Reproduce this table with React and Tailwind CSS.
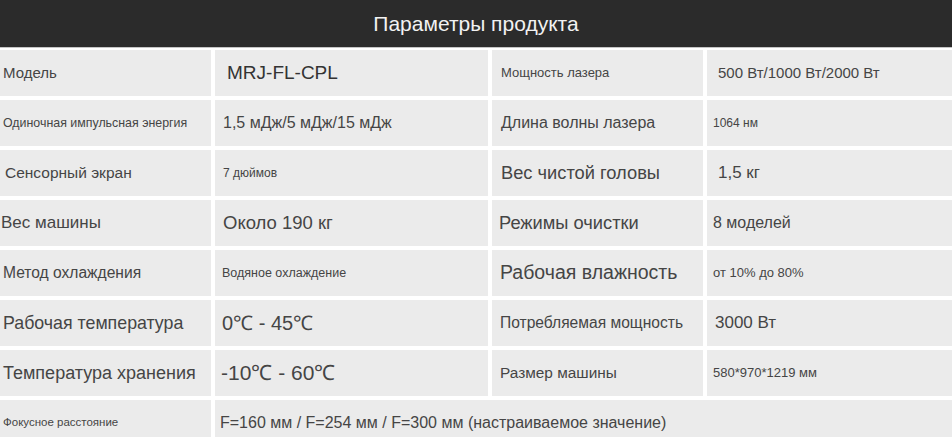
const rows = [
  [
    { t: 'Модель', c: 'text-[15px] pl-[3px]' },
    { t: 'MRJ-FL-CPL', c: 'text-[19px] pl-[12px] text-[#333]' },
    { t: 'Мощность лазера', c: 'text-[13px] pl-[9px]' },
    { t: '500 Вт/1000 Вт/2000 Вт', c: 'text-[15px] pl-[11px]' },
  ],
  [
    { t: 'Одиночная импульсная энергия', c: 'text-[12.4px] pl-[3px]' },
    { t: '1,5 мДж/5 мДж/15 мДж', c: 'text-[16px] pl-[8px]' },
    { t: 'Длина волны лазера', c: 'text-[16px] pl-[9px]' },
    { t: '1064 нм', c: 'text-[12px] pl-[6px]' },
  ],
  [
    { t: 'Сенсорный экран', c: 'text-[15.5px] pl-[5px]' },
    { t: '7 дюймов', c: 'text-[12px] pl-[8px]' },
    { t: 'Вес чистой головы', c: 'text-[18.3px] pl-[9px]' },
    { t: '1,5 кг', c: 'text-[17px] pl-[11px]' },
  ],
  [
    { t: 'Вес машины', c: 'text-[17px] pl-[1px]' },
    { t: 'Около 190 кг', c: 'text-[18.5px] pl-[8px]' },
    { t: 'Режимы очистки', c: 'text-[18.3px] pl-[7px]' },
    { t: '8 моделей', c: 'text-[16px] pl-[6px]' },
  ],
  [
    { t: 'Метод охлаждения', c: 'text-[15.6px] pl-[3px]' },
    { t: 'Водяное охлаждение', c: 'text-[12.5px] pl-[7px]' },
    { t: 'Рабочая влажность', c: 'text-[19.5px] pl-[8px]' },
    { t: 'от 10% до 80%', c: 'text-[13px] pl-[6px]' },
  ],
  [
    { t: 'Рабочая температура', c: 'text-[17.8px] pl-[3px]' },
    { t: '0℃ - 45℃', c: 'text-[20px] pl-[7px]' },
    { t: 'Потребляемая мощность', c: 'text-[15.6px] pl-[8px]' },
    { t: '3000 Вт', c: 'text-[17px] pl-[8px]' },
  ],
  [
    { t: 'Температура хранения', c: 'text-[18px] pl-[3px]' },
    { t: '-10℃ - 60℃', c: 'text-[21px] pl-[6px]' },
    { t: 'Размер машины', c: 'text-[15.4px] pl-[8px]' },
    { t: '580*970*1219 мм', c: 'text-[13px] pl-[6px]' },
  ],
]

export default function App() {
  return (
    <div className="w-[952px] bg-white font-['Liberation_Sans',Arial,sans-serif] text-[#454545]">
      <div className="h-[48px] bg-[#2b2b2b] border-b border-[#c4c4c4] flex items-center justify-center mb-[2px]">
        <span className="text-[21px] text-[#f2f2f2]">Параметры продукта</span>
      </div>
      <div className="grid grid-cols-[211px_273px_211px_1fr] gap-[4px]">
        {rows.map((row, i) =>
          row.map((cell, j) => (
            <div key={i + '-' + j} className={'h-[46px] bg-[#ebebeb] flex items-center whitespace-nowrap ' + cell.c}>
              {cell.t}
            </div>
          ))
        )}
        <div className="h-[46px] bg-[#ebebeb] flex items-center pl-[3px] text-[11.5px] whitespace-nowrap">
          Фокусное расстояние
        </div>
        <div className="col-span-3 h-[46px] bg-[#ebebeb] flex items-center pl-[5px] text-[16px] whitespace-nowrap">
          F=160 мм / F=254 мм / F=300 мм (настраиваемое значение)
        </div>
      </div>
    </div>
  )
}
